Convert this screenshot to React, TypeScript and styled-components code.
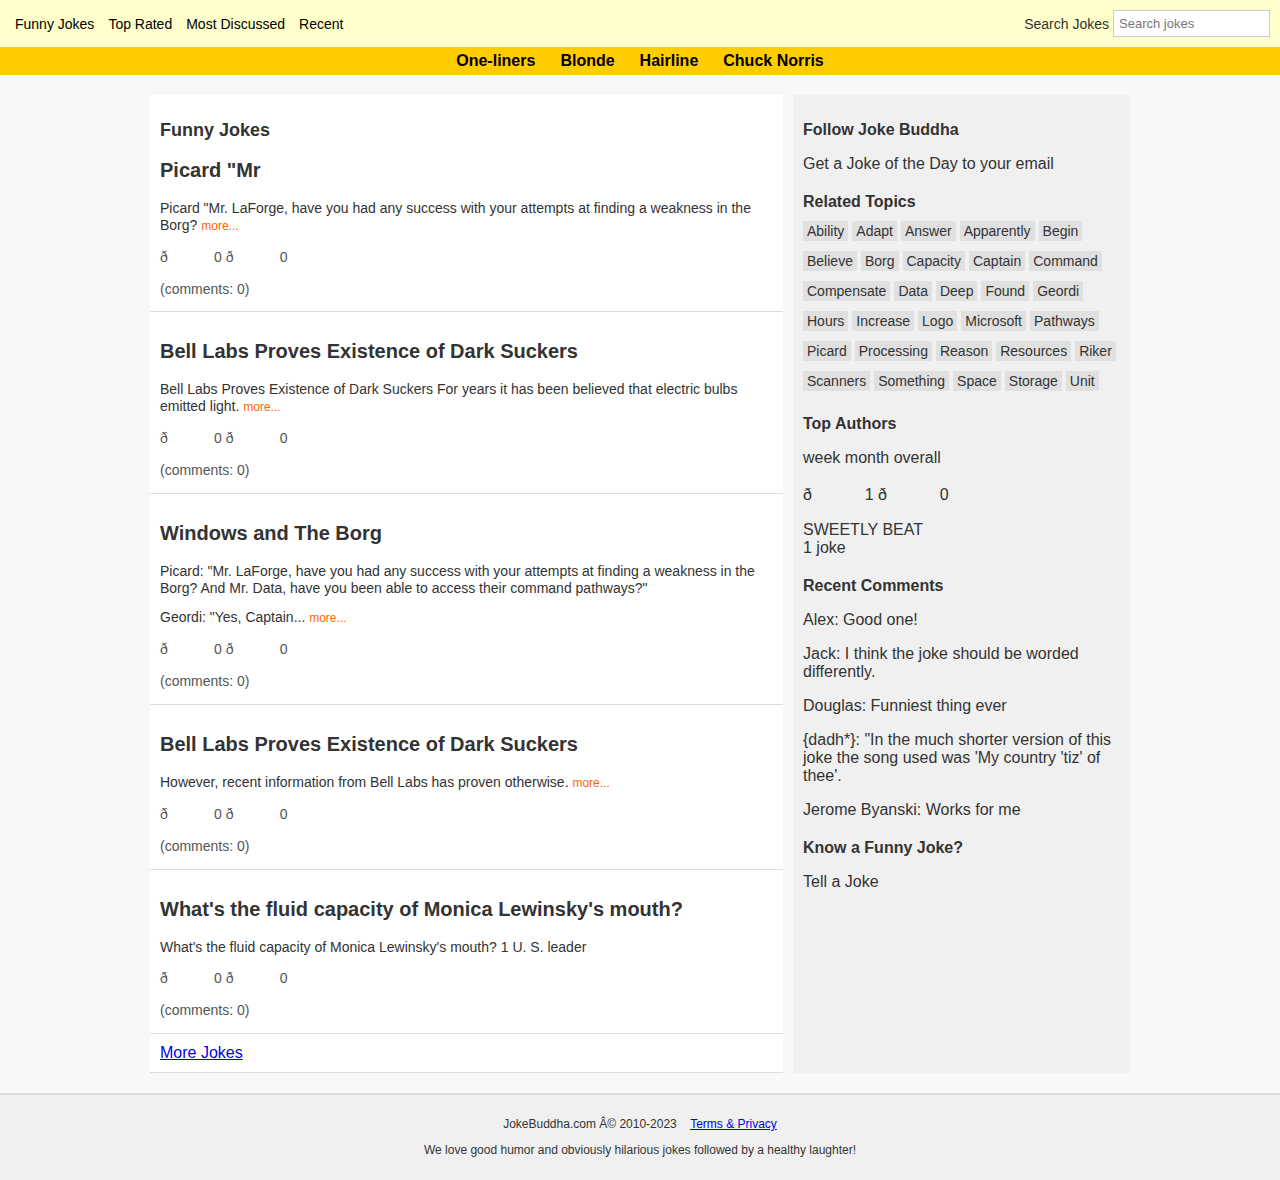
import React, { FC } from 'react';
import styled, { createGlobalStyle } from 'styled-components';

const GlobalStyle = createGlobalStyle`
  body {
    margin: 0;
    background: #f8f8f8;
    font-family: "Liberation Sans", Arial, sans-serif;
    color: #333;
  }
`;

const TopNav = styled.div`
  height: 47px;
  background: #ffffcc;
  display: flex;
  align-items: center;
  justify-content: space-between;
  padding: 0 10px 0 15px;
`;

const NavLinks = styled.div`
  display: flex;
  gap: 14px;
  font-size: 14px;
`;

const NavLink = styled.a`
  color: #000;
  text-decoration: none;
`;

const Search = styled.label`
  display: flex;
  align-items: center;
  gap: 4px;
  font-size: 14px;
  color: #333;
`;

const SearchInput = styled.input`
  width: 157px;
  height: 27px;
  box-sizing: border-box;
  border: 1px solid #ccc;
  padding: 0 5px;
  font-family: inherit;
  font-size: 13px;
  color: #333;
  &::placeholder {
    color: #777;
  }
`;

const CategoryBar = styled.div`
  height: 28px;
  background: #ffcc00;
  display: flex;
  align-items: center;
  justify-content: center;
  gap: 25px;
`;

const CategoryLink = styled.a`
  color: #000;
  font-weight: bold;
  font-size: 16px;
  text-decoration: none;
`;

const Container = styled.div`
  width: 980px;
  margin: 20px auto;
  display: grid;
  grid-template-columns: 633px 337px;
  gap: 10px;
`;

const Main = styled.div`
  background: #fff;
`;

const PageTitle = styled.h1`
  font-size: 18px;
  line-height: 21px;
  margin: 0;
  padding: 25px 10px 0;
  color: #333;
`;

const Joke = styled.div`
  padding: 10px 10px 14.5px;
  border-bottom: 1px solid #ddd;
  &:first-of-type {
    padding-top: 0;
    padding-bottom: 13.5px;
  }
`;

const JokeTitle = styled.h2`
  font-size: 20px;
  line-height: 23px;
  margin: 18px 0 18px;
  color: #333;
`;

const JokeBody = styled.div`
  font-size: 14px;
  line-height: 17px;
  margin-bottom: 13.5px;
  p {
    margin: 0 0 12px;
  }
  p:last-child {
    margin-bottom: 0;
  }
`;

const More = styled.a`
  color: #ff6600;
  font-size: 12px;
  text-decoration: none;
`;

const Stats = styled.div<{ $size: number }>`
  font-size: ${(p) => p.$size}px;
  line-height: ${(p) => (p.$size < 15 ? 17 : 21)}px;
  color: ${(p) => (p.$size < 15 ? '#555' : '#333')};
`;

const SideStats = styled.div`
  margin: 17px 0 16px;
`;

const Count = styled.span`
  margin-left: 3.3em;
`;

const Comments = styled.div`
  font-size: 14px;
  line-height: 17px;
  color: #555;
  margin-top: 15px;
`;

const MoreRow = styled.div`
  padding: 10px;
  line-height: 18px;
  font-size: 16px;
  border-bottom: 1px solid #ddd;
  a {
    color: #0000ee;
  }
`;

const Sidebar = styled.div`
  background: #f0f0f0;
  padding: 6px 10px 10px;
  font-size: 16px;
  line-height: 18px;
  p {
    margin: 16px 0;
  }
`;

const SideHeading = styled.h3`
  font-size: 16px;
  line-height: 18px;
  margin: 20px 0 10px;
  color: #333;
`;

const TagList = styled.div`
  display: flex;
  flex-wrap: wrap;
  gap: 10px 4px;
  margin-bottom: 24px;
`;

const Tag = styled.span`
  background: #e0e0e0;
  font-size: 14px;
  line-height: 20px;
  padding: 0 4px;
  color: #333;
`;

const Footer = styled.div`
  background: #f0f0f0;
  border-top: 2px solid #ddd;
  padding: 22px 0 13px;
  text-align: center;
  font-size: 12px;
  color: #333;
  p {
    margin: 0 0 12px;
    line-height: 14px;
  }
  a {
    color: #0000ee;
    margin-left: 10px;
  }
`;

interface JokeData {
  title: string;
  paras: string[];
  more: boolean;
}

const jokes: JokeData[] = [
  {
    title: 'Picard "Mr',
    paras: ['Picard "Mr. LaForge, have you had any success with your attempts at finding a weakness in the Borg?'],
    more: true,
  },
  {
    title: 'Bell Labs Proves Existence of Dark Suckers',
    paras: [
      'Bell Labs Proves Existence of Dark Suckers For years it has been believed that electric bulbs emitted light.',
    ],
    more: true,
  },
  {
    title: 'Windows and The Borg',
    paras: [
      'Picard: "Mr. LaForge, have you had any success with your attempts at finding a weakness in the Borg? And Mr. Data, have you been able to access their command pathways?"',
      'Geordi: "Yes, Captain...',
    ],
    more: true,
  },
  {
    title: 'Bell Labs Proves Existence of Dark Suckers',
    paras: ['However, recent information from Bell Labs has proven otherwise.'],
    more: true,
  },
  {
    title: "What's the fluid capacity of Monica Lewinsky's mouth?",
    paras: ["What's the fluid capacity of Monica Lewinsky's mouth? 1 U. S. leader"],
    more: false,
  },
];

const tags = [
  'Ability', 'Adapt', 'Answer', 'Apparently', 'Begin', 'Believe', 'Borg', 'Capacity', 'Captain', 'Command',
  'Compensate', 'Data', 'Deep', 'Found', 'Geordi', 'Hours', 'Increase', 'Logo', 'Microsoft', 'Pathways',
  'Picard', 'Processing', 'Reason', 'Resources', 'Riker', 'Scanners', 'Something', 'Space', 'Storage', 'Unit',
];

const comments = [
  'Alex: Good one!',
  'Jack: I think the joke should be worded differently.',
  'Douglas: Funniest thing ever',
  "{dadh*}: \"In the much shorter version of this joke the song used was 'My country 'tiz' of thee'.",
  'Jerome Byanski: Works for me',
];

const Votes: FC<{ up: number; down: number; size: number }> = ({ up, down, size }) => (
  <Stats $size={size}>
    ð<Count>{up}</Count> ð<Count>{down}</Count>
  </Stats>
);

const App: FC = () => {
  return (
    <>
      <GlobalStyle />
      <TopNav>
        <NavLinks>
          <NavLink href="#">Funny Jokes</NavLink>
          <NavLink href="#">Top Rated</NavLink>
          <NavLink href="#">Most Discussed</NavLink>
          <NavLink href="#">Recent</NavLink>
        </NavLinks>
        <Search>
          Search Jokes
          <SearchInput placeholder="Search jokes" />
        </Search>
      </TopNav>
      <CategoryBar>
        <CategoryLink href="#">One-liners</CategoryLink>
        <CategoryLink href="#">Blonde</CategoryLink>
        <CategoryLink href="#">Hairline</CategoryLink>
        <CategoryLink href="#">Chuck Norris</CategoryLink>
      </CategoryBar>
      <Container>
        <Main>
          <PageTitle>Funny Jokes</PageTitle>
          {jokes.map((j, i) => (
            <Joke key={i}>
              <JokeTitle>{j.title}</JokeTitle>
              <JokeBody>
                {j.paras.map((p, k) => (
                  <p key={k}>
                    {p}
                    {j.more && k === j.paras.length - 1 && (
                      <>
                        {' '}
                        <More href="#">more...</More>
                      </>
                    )}
                  </p>
                ))}
              </JokeBody>
              <Votes up={0} down={0} size={14} />
              <Comments>(comments: 0)</Comments>
            </Joke>
          ))}
          <MoreRow>
            <a href="#">More Jokes</a>
          </MoreRow>
        </Main>
        <Sidebar>
          <SideHeading>Follow Joke Buddha</SideHeading>
          <p>Get a Joke of the Day to your email</p>
          <SideHeading>Related Topics</SideHeading>
          <TagList>
            {tags.map((t) => (
              <Tag key={t}>{t}</Tag>
            ))}
          </TagList>
          <SideHeading>Top Authors</SideHeading>
          <p>week month overall</p>
          <SideStats>
            <Votes up={1} down={0} size={16} />
          </SideStats>
          <p>
            SWEETLY BEAT
            <br />1 joke
          </p>
          <SideHeading>Recent Comments</SideHeading>
          {comments.map((c) => (
            <p key={c}>{c}</p>
          ))}
          <SideHeading>Know a Funny Joke?</SideHeading>
          <p>Tell a Joke</p>
        </Sidebar>
      </Container>
      <Footer>
        <p>
          JokeBuddha.com Â© 2010-2023 <a href="#">Terms &amp; Privacy</a>
        </p>
        <p>We love good humor and obviously hilarious jokes followed by a healthy laughter!</p>
      </Footer>
    </>
  );
};

export default App;
